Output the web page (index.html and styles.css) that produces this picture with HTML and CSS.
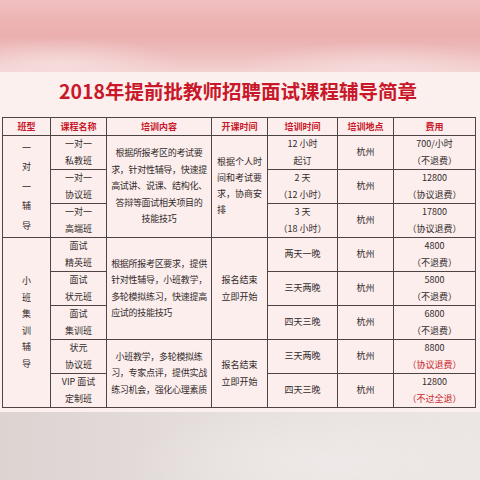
FILE: index.html
```html
<!DOCTYPE html>
<html lang="zh-CN">
<head>
<meta charset="utf-8">
<title>2018年提前批教师招聘面试课程辅导简章</title>
<link rel="stylesheet" href="styles.css">
</head>
<body>
<div class="page">
  <div class="hero"></div>
  <section class="panel">
    <h1 class="title">2018年提前批教师招聘面试课程辅导简章</h1>
    <table class="grid">
      <colgroup>
        <col class="c1"><col class="c2"><col class="c3"><col class="c4"><col class="c5"><col class="c6"><col class="c7">
      </colgroup>
      <thead>
        <tr class="head">
          <th>班型</th><th>课程名称</th><th>培训内容</th><th>开课时间</th><th>培训时间</th><th>培训地点</th><th>费用</th>
        </tr>
      </thead>
      <tbody>
        <tr class="r">
          <td rowspan="3" class="vert v1">一<br>对<br>一<br>辅<br>导</td>
          <td>一对一<br>私教班</td>
          <td rowspan="3" class="content lh18">根据所报考区的考试要<br>求，针对性辅导，快速提<br>高试讲、说课、结构化、<br>答辩等面试相关项目的<br>技能技巧</td>
          <td rowspan="3" class="start"><span class="left">根据个人时<br>间和考试要<br>求，协商安<br>排</span></td>
          <td>12 小时<br>起订</td>
          <td>杭州</td>
          <td>700/小时<br>（不退费）</td>
        </tr>
        <tr class="r">
          <td>一对一<br>协议班</td>
          <td>2 天<br>（12 小时）</td>
          <td>杭州</td>
          <td>12800<br>（协议退费）</td>
        </tr>
        <tr class="r">
          <td>一对一<br>高端班</td>
          <td>3 天<br>（18 小时）</td>
          <td>杭州</td>
          <td>17800<br>（协议退费）</td>
        </tr>
        <tr class="r">
          <td rowspan="5" class="vert">小<br>班<br>集<br>训<br>辅<br>导</td>
          <td>面试<br>精英班</td>
          <td rowspan="3" class="content"><span class="left">根据所报考区要求，提供<br>针对性辅导，小班教学，<br>多轮模拟练习，快速提高<br>应试的技能技巧</span></td>
          <td rowspan="3">报名结束<br>立即开始</td>
          <td>两天一晚</td>
          <td>杭州</td>
          <td>4800<br>（不退费）</td>
        </tr>
        <tr class="r">
          <td>面试<br>状元班</td>
          <td>三天两晚</td>
          <td>杭州</td>
          <td>5800<br>（不退费）</td>
        </tr>
        <tr class="r">
          <td>面试<br>集训班</td>
          <td>四天三晚</td>
          <td>杭州</td>
          <td>6800<br>（不退费）</td>
        </tr>
        <tr class="r">
          <td>状元<br>协议班</td>
          <td rowspan="2" class="content">小班教学，多轮模拟练<br>习，专家点评，提供实战<br>练习机会，强化心理素质</td>
          <td rowspan="2">报名结束<br>立即开始</td>
          <td>三天两晚</td>
          <td>杭州</td>
          <td>8800<br><span class="red">（协议退费）</span></td>
        </tr>
        <tr class="r">
          <td>VIP 面试<br>定制班</td>
          <td>四天三晚</td>
          <td>杭州</td>
          <td>12800<br><span class="red">（不过全退）</span></td>
        </tr>
      </tbody>
    </table>
  </section>
  <div class="footer"></div>
</div>
</body>
</html>
```

FILE: styles.css
```css
html, body {
  margin: 0;
  padding: 0;
}
body {
  width: 480px;
  height: 480px;
  overflow: hidden;
  font-family: "Noto Sans CJK SC", "Noto Sans", sans-serif;
  background: #e6dedc;
}
.page {
  display: flex;
  flex-direction: column;
  height: 480px;
}
.hero {
  height: 72px;
  flex: none;
  background:
    radial-gradient(ellipse 120px 26px at 60px 64px, rgba(248, 228, 228, 0.7), rgba(248, 228, 228, 0)),
    radial-gradient(ellipse 140px 24px at 380px 66px, rgba(248, 226, 226, 0.6), rgba(248, 226, 226, 0)),
    linear-gradient(180deg, #f0c0c0 0%, #edb3b3 30%, #ebafaf 50%, #eebdbd 75%, #f3d2d2 100%);
}
.panel {
  flex: none;
  background: #fcf0ef;
  padding: 0 6px 4px 2px;
}
.title {
  margin: 0;
  height: 45px;
  line-height: 38px;
  text-align: center;
  font-size: 19.5px;
  font-weight: 700;
  color: #c8182a;
}
.grid {
  width: 473px;
  table-layout: fixed;
  border-collapse: collapse;
  font-size: 9px;
  color: #332c2c;
  background: #fbeeed;
}
.c1 { width: 48px; }
.c2 { width: 56px; }
.c3 { width: 105px; }
.c4 { width: 56px; }
.c5 { width: 70px; }
.c6 { width: 56px; }
.c7 { width: 82px; }
.grid th, .grid td {
  border: 1px solid #4e4444;
  padding: 0;
  text-align: center;
  vertical-align: middle;
  white-space: nowrap;
  line-height: 16.5px;
}
.grid th {
  height: 17px;
  color: #c8182a;
  font-weight: 700;
  font-size: 9px;
  line-height: 17px;
}
.grid .r {
  height: 33.5px;
}
.vert {
  line-height: 16.5px;
}
.vert.v1 {
  line-height: 19.5px;
}
.content {
  letter-spacing: -0.3px;
}
.lh18 {
  line-height: 18px;
}
.left {
  display: inline-block;
  text-align: left;
}
.start .left {
  line-height: 16px;
}
.red {
  color: #cc1f2c;
}
.footer {
  flex: 1;
  background:
    radial-gradient(ellipse 200px 60px at 330px 50px, rgba(240, 235, 234, 0.8), rgba(240, 235, 234, 0)),
    linear-gradient(90deg, #ddd4d2 0%, #e6dfdd 50%, #ebe5e4 100%);
}
```
